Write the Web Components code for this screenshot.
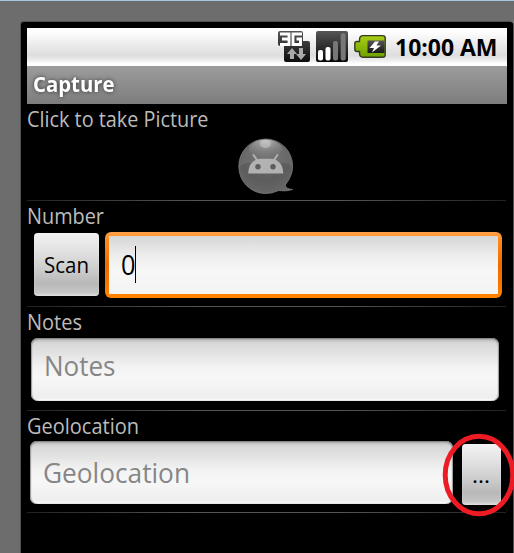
<!DOCTYPE html>
<html lang="en"><head><meta charset="utf-8"><title>Capture</title>
<style>
html,body{margin:0;height:100%;overflow:hidden;background:#6d6d6d}
body{font-family:"Open Sans","Noto Sans",sans-serif}
</style></head><body>
<phone-frame>
  <status-bar></status-bar>
  <title-bar>Capture</title-bar>
  <form-row style="height:97px">
    <fit-text text="Click to take Picture" size="22" w="181.5" base="22.8"></fit-text>
    <picture-icon></picture-icon>
  </form-row>
  <form-row style="height:106px">
    <fit-text text="Number" size="22" w="77" base="22.8"></fit-text>
    <div style="display:flex;gap:6px;padding:1px 0 0 7px">
      <push-button style="width:65px;height:63px;margin-top:1px"><fit-text text="Scan" size="22" w="45" base="39.6"></fit-text></push-button>
      <text-field focused style="width:397px;height:66px"><fit-text text="0" size="28" w="14.5" base="43" style="margin-left:16px"></fit-text></text-field>
    </div>
  </form-row>
  <form-row style="height:104px">
    <fit-text text="Notes" size="22" w="55" base="22.8"></fit-text>
    <text-field style="width:468px;height:63px;margin:1px 0 0 4px"><fit-text text="Notes" size="28" w="71.5" base="37.7" style="margin-left:13px"></fit-text></text-field>
  </form-row>
  <form-row style="height:102px">
    <fit-text text="Geolocation" size="22" w="112" base="22.8"></fit-text>
    <div style="display:flex;gap:9px;padding-left:3px">
      <text-field style="width:423px;height:63px"><fit-text text="Geolocation" size="28" w="147" base="42" style="margin-left:13px"></fit-text></text-field>
      <push-button style="width:39px;height:61px;margin-top:3px"><fit-text text="..." size="22" w="18" base="38.7" style="margin-right:2px"></fit-text></push-button>
    </div>
  </form-row>
</phone-frame>
<highlight-ring></highlight-ring>
<script>
const define=(name,html)=>customElements.define(name,class extends HTMLElement{
  constructor(){super();this.attachShadow({mode:'open'}).innerHTML=typeof html==='function'?'':html;}
  connectedCallback(){if(typeof html==='function')this.shadowRoot.innerHTML=html(this);}
});

/* One line of text, condensed to a given advance width, on a given baseline */
define('fit-text',el=>{
  const w=el.getAttribute('w'),s=el.getAttribute('size'),b=el.getAttribute('base');
  return `<style>:host{display:block;height:30px;width:${w}px;flex:none}svg{display:block;overflow:visible}text{fill:currentColor;white-space:pre}</style>
  <svg width="${w}" height="30"><text x="0" y="${b}" font-size="${s}" textLength="${w}" lengthAdjust="spacingAndGlyphs">${el.getAttribute('text')}</text></svg>`;
});

define('phone-frame',`<style>
:host{display:block;height:100%;box-sizing:border-box;padding:22px 1px 0 21px;background:linear-gradient(#a9c6e6,#a9c6e6) 0 0/100% 1px no-repeat,#6d6d6d}
.case{height:100%;box-sizing:border-box;background:#000;border-radius:3px 3px 0 0;padding:6px 6px 0;box-shadow:0 0 0 1px #505050,1px 0 0 1px #999}
</style><div class="case"><slot></slot></div>`);

define('status-bar',`<style>
:host{display:flex;height:38px;box-sizing:border-box;padding:3px 9px 0 251px;background:linear-gradient(#fff 0,#fcfcfc 15%,#eee 38%,#dedede 72%,#e8e8e8 82%,#fff 94%);color:#000;font-weight:700}
svg{display:block;flex:none}.g{margin-right:6px}.b{margin-right:9px}
</style>
<svg class="g" width="32" height="32" viewBox="0 0 32 32"><defs><linearGradient id="d" x2="0" y2="1"><stop stop-color="#555"/><stop offset="1" stop-color="#0c0c0c"/></linearGradient></defs>
<path d="M2 0H23Q25 0 25 2V10H30Q32 10 32 12V29Q32 31 30 31H8Q6 31 6 29V15H2Q0 15 0 13V2Q0 0 2 0Z" fill="url(#d)"/>
<path d="M2 3H11V13.5H2M4 8H11M24 3H15V13.5H22.5V8H18.5" fill="none" stroke="#fff" stroke-width="2.9"/>
<path d="M14 17L19 23H16V28H12V23H9ZM21 17H25V23H28L23 29L18 23H21Z" fill="#aaa"/></svg>
<svg class="g" width="32" height="32" viewBox="0 0 32 32"><defs><linearGradient id="e" x2="0" y2="1"><stop stop-color="#555"/><stop offset="1" stop-color="#080808"/></linearGradient></defs>
<rect width="32" height="31" rx="2" fill="url(#e)"/><g fill="#fff"><rect x="2" y="19" width="5" height="10.5" rx="2"/><rect x="9.5" y="16" width="5" height="13.5" rx="2"/></g><g fill="#777"><rect x="17" y="10" width="5" height="19.5" rx="2"/><rect x="24.7" y="2.2" width="5" height="27.3" rx="2"/></g></svg>
<svg class="b" width="32" height="32" viewBox="0 0 32 32"><defs><linearGradient id="f" x2="0" y2="1"><stop stop-color="#a8cf14"/><stop offset="1" stop-color="#6fa000"/></linearGradient><linearGradient id="h" x2="0" y2="1"><stop stop-color="#555"/><stop offset="1" stop-color="#171717"/></linearGradient></defs>
<path d="M9 4.6H28.5Q31.2 4.6 31.2 7V24Q31.2 26.2 28.5 26.2H9Q5.5 26.2 5.5 22V20.5H3Q.8 20.5.8 18V12.5Q.8 10.5 3 10.5H5.5V9Q5.5 4.6 9 4.6Z" fill="url(#f)" stroke="#353b20" stroke-width="1.4"/>
<rect x="13.5" y="9.5" width="17" height="12.5" fill="url(#h)"/><path d="M21 10.5L15.5 17H20L18 21.5L27 14.5H22.5L25 10.5Z" fill="#fff"/></svg>
<fit-text text="10:00 AM" size="24" w="102.5" base="25"></fit-text>`);

define('title-bar',el=>`<style>
:host{display:block;height:38px;box-sizing:border-box;padding-left:6px;background:linear-gradient(#9c9c9c,#7d7d7d);color:#fff;font-weight:700;font-size:0}
fit-text{filter:drop-shadow(0 0 2px #333)}
</style><fit-text text="${el.textContent.trim()}" size="21.5" w="81.5" base="26"></fit-text>`);

define('form-row',`<style>
:host{display:block;box-sizing:border-box;color:#bcbcbc;background:linear-gradient(90deg,#222,#555 35%,#555 65%,#222) 0 100%/479px 1px no-repeat}
</style><slot></slot>`);

define('push-button',`<style>
:host{display:flex;justify-content:center;color:#000;border-radius:4px;flex:none;background:linear-gradient(#f3f3f3,#e2e2e2 28%,#c9c9c9 62%,#b8b8b8 80%,#c5c5c5 94%,#dedede);box-shadow:inset 0 0 1px #fff}
</style><slot></slot>`);

define('text-field',el=>{
  const f=el.hasAttribute('focused');
  return `<style>
:host{display:flex;box-sizing:border-box;color:${f?'#000':'#868686'};flex:none;border-radius:${f?6:7}px;
background:${f?'linear-gradient(#d6d6d6,#eee 35%,#f7f7f7 60%,#f3f3f3) 4px 4px/calc(100% - 8px) calc(100% - 8px) no-repeat,linear-gradient(#ffa14d,#ff8a1c 12%,#f06b00 50%,#fa7800 85%,#ff8500)':'linear-gradient(#bcbcbc,#d8d8d8 9%,#e3e3e3 25%,#f3f3f3 46%,#f7f7f7 65%,#eee 95%,#fff)'};
box-shadow:${f?'none':'inset 0 1px 2px #777,inset 1px 0 1px #aaa,inset -1px 0 1px #aaa'}}
.caret{width:1px;height:37px;margin:14px 0 0 -.5px;background:#000}
</style><slot></slot>${f?'<div class="caret"></div>':''}`;
});

define('picture-icon',`<style>:host{display:block;width:56px;margin:4px 0 0 210.5px}svg{display:block}</style>
<svg width="56" height="57" viewBox="0 0 56 57"><defs>
<radialGradient id="b" cx=".5" cy=".3" r=".75"><stop stop-color="#6e6e6e"/><stop offset=".6" stop-color="#5c5c5c"/><stop offset="1" stop-color="#696969"/></radialGradient>
<radialGradient id="t" cx=".5" cy=".05" r=".9"><stop stop-color="#c2c2c2"/><stop offset=".3" stop-color="#969696"/><stop offset="1" stop-color="#707070" stop-opacity=".4"/></radialGradient></defs>
<path d="M27.5 1A27 27 0 0 1 54.6 28C54.6 36 51 42 47.3 47Q47.5 51 54.5 51.5Q49 53.6 40.5 52.6Q34 55.6 27.5 55.6A27 27 0 0 1 .8 28A27 27 0 0 1 27.5 1Z" fill="url(#b)" stroke="#7c7c7c" stroke-width=".8"/>
<path d="M1.2 29Q8 24 13 25H42Q49 24 54 29A26.7 26.7 0 0 0 49 12Q39 2 27.5 2A26.7 26.7 0 0 0 1.2 29Z" fill="#888" opacity=".28"/>
<ellipse cx="27.5" cy="11.5" rx="16.5" ry="10" fill="url(#t)"/><ellipse cx="27.5" cy="6" rx="5.5" ry="4" fill="#ccc" opacity=".55"/>
<path d="M10.2 35.5Q10.8 22 22 20.8H33Q44.7 22 45.3 35.5Z" fill="#b2b2b2"/><path d="M15.5 17L20 23.5M39.5 17L35 23.5" stroke="#b2b2b2" stroke-width="2" stroke-linecap="round"/>
<circle cx="20" cy="28.8" r="2.7" fill="#5c5c5c"/><circle cx="35" cy="28.8" r="2.7" fill="#5c5c5c"/></svg>`);

define('highlight-ring',`<style>:host{position:absolute;left:441px;top:432px;width:73px;height:87px;overflow:hidden}svg{display:block}</style>
<svg width="73" height="87"><ellipse cx="38" cy="43" rx="33.8" ry="38.7" fill="none" stroke="#ed1c24" stroke-width="5"/></svg>`);
</script></body></html>
